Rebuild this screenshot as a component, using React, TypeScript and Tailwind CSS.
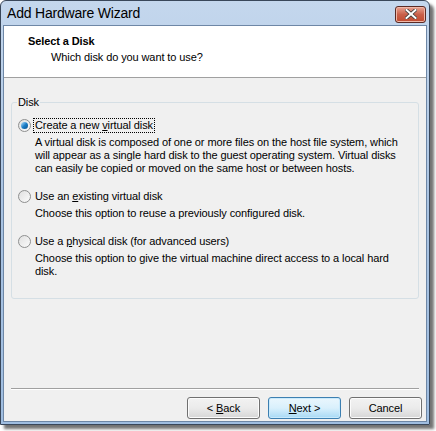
import React from 'react';

const font = { fontFamily: '"Liberation Sans", Arial, sans-serif' };

const Radio: React.FC<{ checked?: boolean }> = ({ checked }) => (
  <span className="relative inline-block h-[13px] w-[13px] shrink-0 rounded-full border border-[#8e8f8f] bg-gradient-to-br from-[#e0e0e0] to-[#fbfbfb]">
    {checked && (
      <span className="absolute left-[2px] top-[2px] h-[7px] w-[7px] rounded-full bg-gradient-to-br from-[#aee4fb] via-[#1a7fc8] to-[#0b4f8c]" />
    )}
  </span>
);

const Option: React.FC<{
  checked?: boolean;
  label: React.ReactNode;
  focused?: boolean;
  desc: string[];
}> = ({ checked, label, focused, desc }) => (
  <div>
    <div className="flex items-center gap-[3px]">
      <Radio checked={checked} />
      <span
        className={
          'leading-[13px] px-[1px] ' +
          (focused ? 'outline outline-1 outline-dotted outline-black' : 'outline outline-1 outline-transparent')
        }
      >
        {label}
      </span>
    </div>
    <div className="mt-[4px] pl-[17px] leading-[13px]">
      {desc.map((d) => (
        <div key={d}>{d}</div>
      ))}
    </div>
  </div>
);

const Button: React.FC<{ primary?: boolean; children: React.ReactNode }> = ({ primary, children }) => (
  <div
    className={
      'flex h-[22px] w-[73px] items-center justify-center rounded-[3px] border text-[11px] text-black ' +
      (primary
        ? 'border-[#3c7fb1] bg-gradient-to-b from-[#eaf6fd] via-[#d9f0fc] to-[#a7d9f5] shadow-[inset_0_0_0_1px_#c9eafc]'
        : 'border-[#707070] bg-gradient-to-b from-[#f2f2f2] via-[#ebebeb] to-[#d6d6d6] shadow-[inset_0_0_0_1px_#fcfcfc]')
    }
  >
    {children}
  </div>
);

export default function App() {
  return (
    <div className="h-[431px] w-[436px] bg-white" style={font}>
      <div className="flex h-[425px] w-[430px] flex-col rounded-t-[6px] border border-[#39475a] bg-gradient-to-b from-[#c4d7ed] via-[#a9c3e2] to-[#9fbde0] shadow-[4px_4px_3px_rgba(0,0,0,0.55)]">
        {/* Title bar */}
        <div className="flex h-[24px] items-center justify-between pl-[6px] pr-[3px]">
          <span className="text-[14px] leading-none tracking-[-0.2px] text-black">
            Add Hardware Wizard
          </span>
          <div className="mt-[2px] flex h-[17px] w-[31px] items-center justify-center rounded-[3px] border border-[#5a2a24] bg-gradient-to-b from-[#e8a493] via-[#c9604a] to-[#c04a2f] shadow-[inset_0_0_0_1px_#f0b8a8]">
            <svg width="12" height="10" viewBox="0 0 12 10">
              <path d="M1.5 1 L10.5 9 M10.5 1 L1.5 9" stroke="#3a3a3a" strokeWidth="3.6" strokeLinecap="square" />
              <path d="M1.5 1 L10.5 9 M10.5 1 L1.5 9" stroke="#ffffff" strokeWidth="2" strokeLinecap="square" />
            </svg>
          </div>
        </div>

        {/* Client */}
        <div className="mx-[2px] mb-[2px] flex flex-1 flex-col border border-[#6e87a6] bg-[#f0f0f0] text-[11px] tracking-[-0.1px] text-black">
          <div className="h-[52px] border-b border-[#a0a0a0] bg-white pl-[24px] pt-[8px]">
            <div className="font-bold leading-[14px]">Select a Disk</div>
            <div className="mt-[2px] pl-[23px] leading-[14px]">Which disk do you want to use?</div>
          </div>

          <div className="flex-1 px-[7px] pt-[18px]">
            <fieldset className="h-[203px] rounded-[3px] border border-[#d5dfe5] px-[6px] pb-0 pt-[3px]">
              <legend className="ml-[-1px] px-[1px] leading-[13px]">Disk</legend>
              <div className="flex flex-col gap-[15px] pt-[7px]">
                <Option
                  checked
                  focused
                  label={
                    <>
                      Create a new <u>v</u>irtual disk
                    </>
                  }
                  desc={[
                    'A virtual disk is composed of one or more files on the host file system, which',
                    'will appear as a single hard disk to the guest operating system. Virtual disks',
                    'can easily be copied or moved on the same host or between hosts.',
                  ]}
                />
                <Option
                  label={
                    <>
                      Use an <u>e</u>xisting virtual disk
                    </>
                  }
                  desc={['Choose this option to reuse a previously configured disk.']}
                />
                <Option
                  label={
                    <>
                      Use a <u>p</u>hysical disk (for advanced users)
                    </>
                  }
                  desc={[
                    'Choose this option to give the virtual machine direct access to a local hard',
                    'disk.',
                  ]}
                />
              </div>
            </fieldset>
          </div>

          <div className="mx-[7px] h-[2px] border-b border-t border-b-white border-t-[#a0a0a0]" />
          <div className="flex h-[31px] items-start justify-end gap-[8px] pr-[4px] pt-[7px]">
            <Button>
              &lt;&nbsp;<u>B</u>ack
            </Button>
            <Button primary>
              <u>N</u>ext&nbsp;&gt;
            </Button>
            <Button>Cancel</Button>
          </div>
        </div>
      </div>
    </div>
  );
}
